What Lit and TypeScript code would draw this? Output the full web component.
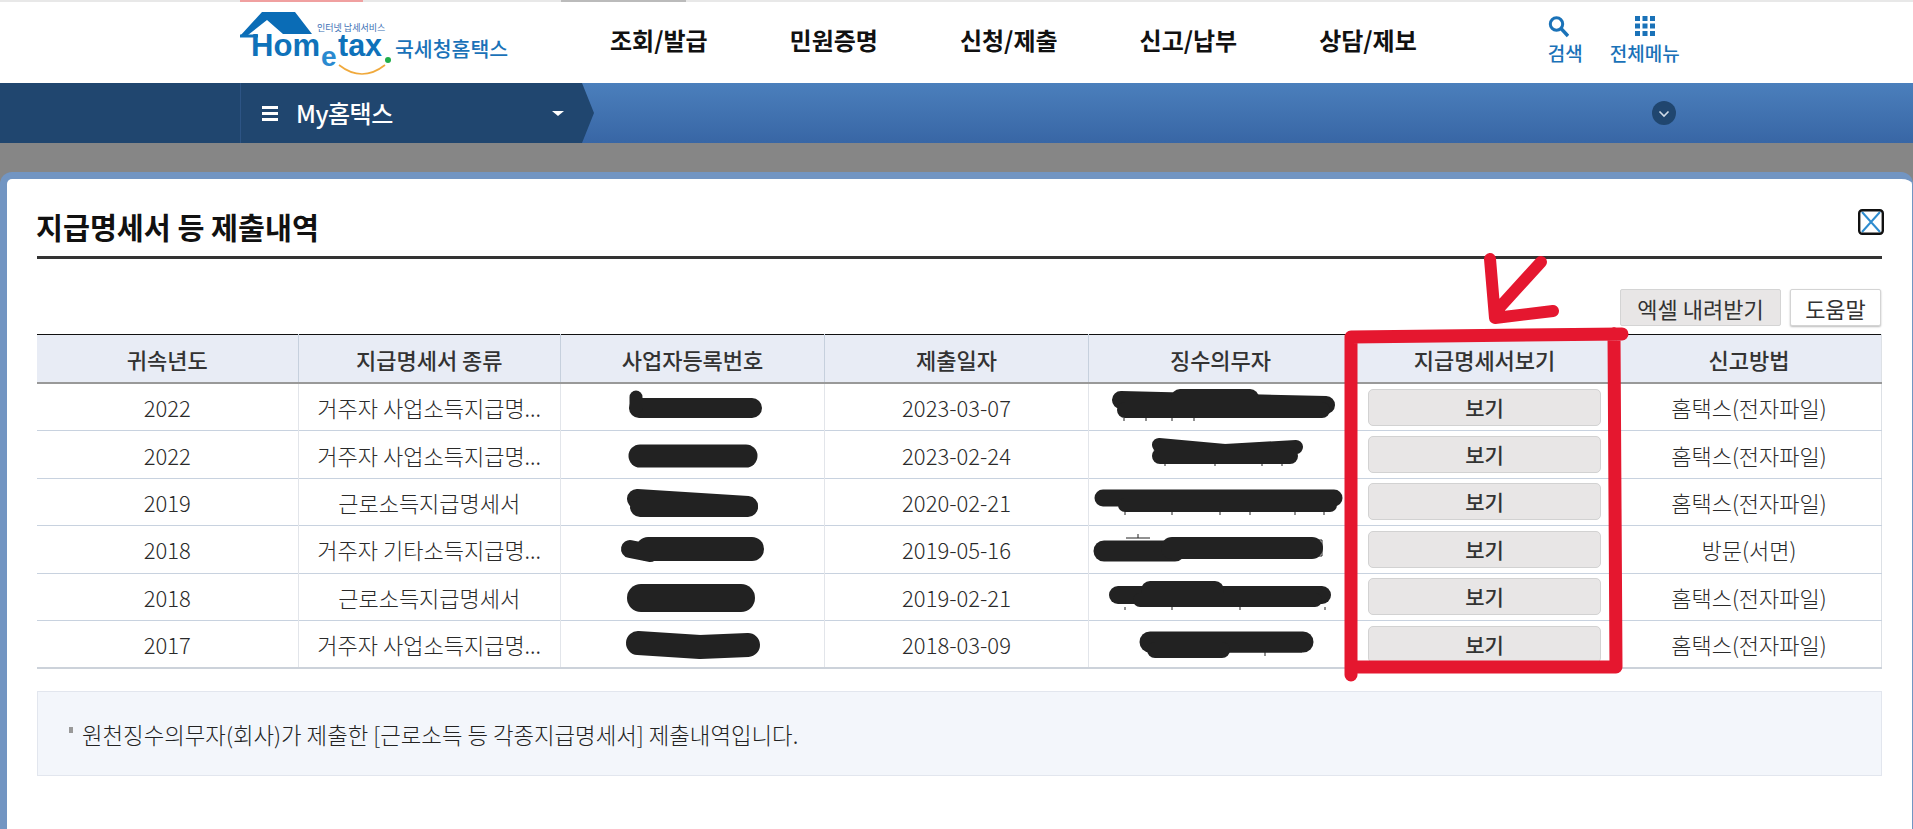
import { html, css, svg, LitElement } from "lit";
import { customElement } from "lit/decorators.js";

const NAV = ["조회/발급", "민원증명", "신청/제출", "신고/납부", "상담/제보"];
const HEADERS = ["귀속년도", "지급명세서 종류", "사업자등록번호", "제출일자", "징수의무자", "지급명세서보기", "신고방법"];
const ROWS = [
	["2022", "거주자 사업소득지급명...", "2023-03-07", "홈택스(전자파일)"],
	["2022", "거주자 사업소득지급명...", "2023-02-24", "홈택스(전자파일)"],
	["2019", "근로소득지급명세서", "2020-02-21", "홈택스(전자파일)"],
	["2018", "거주자 기타소득지급명...", "2019-05-16", "방문(서면)"],
	["2018", "근로소득지급명세서", "2019-02-21", "홈택스(전자파일)"],
	["2017", "거주자 사업소득지급명...", "2018-03-09", "홈택스(전자파일)"],
];

// marker strokes over the redacted cells: [path, stroke width]
const BLOBS: [string, number][] = [
	["M639 408H752", 20], ["M636 397V408", 13],
	["M640 456H746", 23],
	["M637 499L748 506", 20], ["M640 507H748", 20],
	["M630 549L650 553", 18], ["M648 549H752", 24],
	["M641 598H741", 28],
	["M638 643L700 647L748 645", 24],
	["M1121 400L1326 405", 18], ["M1180 398H1250", 18], ["M1125 410H1322", 16],
	["M1159 445L1225 451L1296 447", 14], ["M1160 456H1290", 16],
	["M1103 498H1334", 17], ["M1125 505H1330", 14],
	["M1104 551H1175", 21], ["M1172 548H1312", 22],
	["M1118 595H1322", 18], ["M1150 590H1215", 18], ["M1140 600H1315", 14],
	["M1150 642H1303", 21], ["M1155 650H1222", 16],
];

// bits of the covered text that still show under the marker
const TICKS = [
	"M1124 418V421M1146 418V421M1172 418V421M1194 418V421",
	"M1165 464V466M1215 464V466M1262 464V466M1282 464V466",
	"M1125 512V515M1172 512V515M1220 512V515M1250 512V515M1295 512V515M1324 512V515",
	"M1126 538H1150M1138 534V538M1316 540H1322V556H1316",
	"M1125 607V610M1172 607V610M1240 607V610M1325 607V610",
	"M1225 652H1302M1265 652V656",
];

@customElement("app-root")
export class AppRoot extends LitElement {
	static styles = css`
		:host {
			position: relative;
			height: 829px;
			overflow: hidden;
			display: flex;
			flex-direction: column;
			background: #868686;
			font-family: "Noto Sans CJK KR", "Noto Sans", sans-serif;
			color: #333;
		}
		.strip {
			display: flex;
			height: 2px;
			padding-left: 240px;
			background: #e8e8e8;
		}
		.strip i:first-child {
			width: 123px;
			background: #f0a0a0;
		}
		.strip i:last-child {
			width: 125px;
			margin-left: 198px;
			background: #bbb;
		}
		.top {
			display: flex;
			align-items: center;
			height: 81px;
			padding-left: 240px;
			background: #fff;
		}
		.logo {
			flex: none;
			display: block;
			width: 370px;
			height: 81px;
		}
		.nav {
			display: flex;
			gap: 82px;
			font-size: 24px;
			font-weight: 700;
			color: #111;
			white-space: nowrap;
			padding-bottom: 6px;
		}
		.util {
			display: flex;
			gap: 27px;
			margin-left: 131px;
			padding-bottom: 5px;
			color: #1a72b8;
			font-size: 19px;
			font-weight: 500;
			white-space: nowrap;
		}
		.util div {
			display: flex;
			flex-direction: column;
			align-items: center;
			line-height: 26px;
			gap: 2px;
		}
		.util svg {
			display: block;
		}
		.util .search {
			margin-right: 14px;
		}
		.bar {
			position: relative;
			height: 60px;
			background: linear-gradient(#4b7fbc, #3866a5);
			display: flex;
			align-items: center;
		}
		.bar-left {
			width: 594px;
			height: 60px;
			flex: none;
			background: #20466f;
			clip-path: polygon(0 0, 582px 0, 594px 30px, 582px 60px, 0 60px);
			display: flex;
			align-items: center;
			padding-left: 240px;
			box-sizing: border-box;
			color: #fff;
		}
		.bar-inner {
			display: flex;
			align-items: center;
			width: 342px;
			height: 60px;
			border-left: 1px solid #2d5484;
			padding-left: 21px;
			box-sizing: border-box;
		}
		.burger {
			width: 16px;
			height: 15px;
			margin-right: 18px;
			background: linear-gradient(#fff 3px, transparent 3px, transparent 6px, #fff 6px, #fff 9px, transparent 9px, transparent 12px, #fff 12px);
		}
		.bar-title {
			font-size: 24px;
			font-weight: 500;
			letter-spacing: -0.5px;
			flex: 1;
			line-height: 1;
		}
		.caret {
			width: 0;
			height: 0;
			margin-right: 18px;
			border-left: 6px solid transparent;
			border-right: 6px solid transparent;
			border-top: 5px solid #fff;
		}
		.more {
			width: 24px;
			height: 24px;
			margin-left: 1058px;
			display: block;
		}
		.gap {
			height: 29px;
		}
		.dialog {
			flex: 1;
			min-height: 0;
			background: #fff;
			border: solid #7295c2;
			border-width: 7px 1px 0 7px;
			border-radius: 12px 12px 0 0;
			padding: 0 30px 0 30px;
		}
		.title-row {
			display: flex;
			justify-content: space-between;
			align-items: flex-end;
			height: 77px;
			border-bottom: 3px solid #333;
		}
		h1 {
			margin: 0 0 9px -1px;
			font-size: 29.3px;
			line-height: 42px;
			font-weight: 700;
			color: #111;
		}
		.close {
			display: block;
			margin: 0 -2px 21px 0;
		}
		.tools {
			display: flex;
			justify-content: flex-end;
			gap: 9px;
			margin-top: 30px;
			padding-right: 1px;
		}
		.tools button,
		.view {
			font-family: inherit;
			font-size: 22px;
			color: #333;
			padding: 0;
			cursor: pointer;
			box-sizing: border-box;
		}
		.tools button {
			height: 37px;
			line-height: 1;
			background: #e8e6e6;
			border: 1px solid #d4d4d4;
			border-radius: 2px;
		}
		.excel {
			width: 161px;
		}
		.help {
			width: 91px;
			background: #fff !important;
			box-shadow: 0 1px 2px #bbb;
		}
		table {
			width: 100%;
			margin-top: 8px;
			border-collapse: collapse;
			table-layout: fixed;
			font-size: 22px;
			border-top: 1px solid #111;
			border-bottom: 2px solid #ccd2da;
			border-right: 1px solid #dde1e6;
		}
		th {
			height: 47px;
			padding: 0;
			background: #e8ecf5;
			font-weight: 500;
			border-left: 1px solid #c6d0dd;
			border-bottom: 2px solid #999;
		}
		th:nth-child(1) {
			width: 260.5px;
		}
		th:nth-child(2) {
			width: 261.5px;
		}
		th:nth-child(3),
		th:nth-child(4),
		th:nth-child(5),
		th:nth-child(6) {
			width: 263px;
		}
		th:first-child,
		td:first-child {
			border-left: 0;
		}
		td {
			height: 46.4px;
			padding: 0;
			text-align: center;
			border-left: 1px solid #e2e5ea;
			border-top: 1px solid #c8d2df;
			white-space: nowrap;
			font-weight: 300;
			color: #2a2a2a;
		}
		tbody tr:first-child td {
			border-top: 0;
		}
		.view {
			display: block;
			width: 233px;
			height: 37px;
			margin: 0 auto;
			background: #e8e6e6;
			border: 1px solid #d2d2d2;
			border-radius: 5px;
			font-weight: 500;
			font-size: 21px;
			line-height: 1;
		}
		.notice {
			margin-top: 22px;
			height: 85px;
			box-sizing: border-box;
			background: #f3f6fb;
			border: 1px solid #e2e6ee;
			display: flex;
			align-items: center;
			padding-left: 31px;
			font-size: 22.35px;
			font-weight: 300;
			color: #222;
			gap: 9px;
		}
		.notice i {
			width: 4px;
			height: 6px;
			margin-bottom: 8px;
			background: #999;
		}
		.marks {
			position: absolute;
			top: 0;
			left: 0;
			pointer-events: none;
		}
	`;

	renderLogo() {
		return html`<svg class="logo" viewBox="240 2 370 81" font-family="'Liberation Sans', sans-serif">
			<path d="M240 36L262 12H295L312 34H283L267 20L248 35Z" fill="#0a6cb6" />
			<path d="M240 36H258" stroke="#0f72ba" stroke-width="3" />
			<text x="317" y="31" font-size="9" fill="#3c6fb4" font-family="'Noto Sans CJK KR', sans-serif">인터넷 납세서비스</text>
			<text x="251" y="56" font-size="31" font-weight="700" fill="#0f72ba" textLength="69" lengthAdjust="spacingAndGlyphs">Hom</text>
			<text x="321" y="66" font-size="28" font-weight="700" fill="#2a8ad0">e</text>
			<text x="338" y="56" font-size="31" font-weight="700" fill="#0f72ba" textLength="44" lengthAdjust="spacingAndGlyphs">tax</text>
			<circle cx="388" cy="60" r="3" fill="#1fae4a" />
			<path d="M339 65Q362 83 385 65" fill="none" stroke="#f0a93c" stroke-width="1.6" />
			<text x="395" y="57" font-size="20.5" font-weight="500" fill="#1a72b8" font-family="'Noto Sans CJK KR', sans-serif">국세청홈택스</text>
		</svg>`;
	}

	render() {
		return html`
			<div class="strip"><i></i><i></i></div>
			<header class="top">
				${this.renderLogo()}
				<nav class="nav">${NAV.map((n) => html`<span>${n}</span>`)}</nav>
				<div class="util">
					<div>
						<svg class="search" width="21" height="24" viewBox="0 0 21 24">
							<circle cx="8.5" cy="10" r="6.2" fill="none" stroke="#1a72b8" stroke-width="3" />
							<path d="M13 14.5L20 22" stroke="#1a72b8" stroke-width="3.4" />
						</svg>
						<span>검색</span>
					</div>
					<div>
						<svg width="20" height="24" viewBox="0 0 20 24" fill="#1a72b8">
							${[2, 9.5, 17].map((y) =>
								[0, 7.5, 15].map((x) => svg`<rect x=${x} y=${y} width="5" height="5" />`)
							)}
						</svg>
						<span>전체메뉴</span>
					</div>
				</div>
			</header>
			<div class="bar">
				<div class="bar-left">
					<div class="bar-inner">
						<span class="burger"></span>
						<span class="bar-title">My홈택스</span>
						<span class="caret"></span>
					</div>
				</div>
				<svg class="more" viewBox="0 0 24 24">
					<circle cx="12" cy="12" r="12" fill="#20466f" />
					<path d="M7.5 10.5L12 15L16.5 10.5" fill="none" stroke="#cfdbe8" stroke-width="1.6" />
				</svg>
			</div>
			<div class="gap"></div>
			<section class="dialog">
				<div class="title-row">
					<h1>지급명세서 등 제출내역</h1>
					<svg class="close" width="26" height="26" viewBox="0 0 26 26">
						<path d="M4 3L22 23M22 3L4 23" stroke="#2e8ccf" stroke-width="2" />
						<rect x="1.2" y="1.2" width="23.6" height="23.6" rx="3" fill="none" stroke="#111" stroke-width="2.4" />
					</svg>
				</div>
				<div class="tools">
					<button class="excel">엑셀 내려받기</button>
					<button class="help">도움말</button>
				</div>
				<table>
					<thead>
						<tr>${HEADERS.map((h) => html`<th>${h}</th>`)}</tr>
					</thead>
					<tbody>
						${ROWS.map(
							(r) => html`<tr>
								<td>${r[0]}</td>
								<td>${r[1]}</td>
								<td></td>
								<td>${r[2]}</td>
								<td></td>
								<td><button class="view">보기</button></td>
								<td>${r[3]}</td>
							</tr>`
						)}
					</tbody>
				</table>
				<div class="notice">
					<i></i>
					<span>원천징수의무자(회사)가 제출한 [근로소득 등 각종지급명세서] 제출내역입니다.</span>
				</div>
			</section>
			<svg class="marks" width="1913" height="829" fill="none" stroke-linecap="round" stroke-linejoin="round">
				<g stroke="#222">
					${TICKS.map((d) => svg`<path d=${d} stroke-width="1" stroke-linecap="butt" />`)}
					${BLOBS.map(([d, w]) => svg`<path d=${d} stroke-width=${w} />`)}
				</g>
				<g stroke="#e5172f" stroke-width="13">
					<path d="M1490 259L1495 318L1553 311M1541 262L1500 307" stroke-width="12" />
					<path d="M1351 675L1351 337L1622 334M1614 334L1616 667L1351 667" />
				</g>
			</svg>
		`;
	}
}
